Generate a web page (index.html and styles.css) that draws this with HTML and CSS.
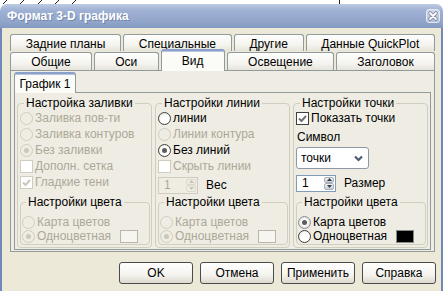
FILE: index.html
```html
<!DOCTYPE html>
<html lang="ru">
<head>
    <meta charset="UTF-8">
    <meta name="viewport" content="width=device-width, initial-scale=1.0">
    <title>Формат 3-D графика</title>
    <link rel="stylesheet" href="styles.css">
</head>
<body>
    <svg class="backdrop" width="447" height="4" viewBox="0 0 447 4">
        <path d="M3 4 L7 0 M20 4 L24 0 M38 4 L42 0 M55 4 L59 0 M72 4 L76 0 M339.5 0 V4" stroke="#222" stroke-width="1" fill="none"/>
    </svg>
    <div class="window">
        <div class="titlebar">
            <span class="title">Формат 3-D графика</span>
            <span class="close">
                <svg width="12" height="12" viewBox="0 0 12 12">
                    <path d="M3 3 L9 9 M9 3 L3 9" stroke="#7b879e" stroke-width="3.6" stroke-linecap="round"/>
                    <path d="M3 3 L9 9 M9 3 L3 9" stroke="#fff" stroke-width="1.8" stroke-linecap="round"/>
                </svg>
            </span>
        </div>
        <div class="frame">
            <div class="tabs">
                <div class="tab-row back">
                    <div class="tab">Задние планы</div>
                    <div class="tab">Специальные</div>
                    <div class="tab">Другие</div>
                    <div class="tab">Данные QuickPlot</div>
                </div>
                <div class="tab-row front">
                    <div class="tab">Общие</div>
                    <div class="tab">Оси</div>
                    <div class="tab active">Вид</div>
                    <div class="tab">Освещение</div>
                    <div class="tab">Заголовок</div>
                </div>
                <div class="panel">
                    <div class="subtabs">
                        <div class="subtab">График 1</div>
                    </div>
                    <div class="subpanel">
                        <!-- fill -->
                        <fieldset class="group">
                            <legend>Настройка заливки</legend>
                            <div class="row off"><span class="radio"></span>Заливка пов-ти</div>
                            <div class="row off"><span class="radio"></span>Заливка контуров</div>
                            <div class="row off"><span class="radio on"></span>Без заливки</div>
                            <div class="row off"><span class="check"></span>Дополн. сетка</div>
                            <div class="row off">
                                <span class="check">
                                    <svg width="11" height="11" viewBox="0 0 11 11"><path d="M2 5.5 L4.5 8 L9 3" stroke="currentColor" stroke-width="2" fill="none"/></svg>
                                </span>Гладкие тени
                            </div>
                            <fieldset class="colors">
                                <legend>Настройки цвета</legend>
                                <div class="row off"><span class="radio"></span>Карта цветов</div>
                                <div class="row off">
                                    <span class="label"><span class="radio on"></span>Одноцветная</span>
                                    <span class="swatch"></span>
                                </div>
                            </fieldset>
                        </fieldset>
                        <!-- lines -->
                        <fieldset class="group">
                            <legend>Настройки линии</legend>
                            <div class="row"><span class="radio"></span>линии</div>
                            <div class="row off"><span class="radio"></span>Линии контура</div>
                            <div class="row"><span class="radio on"></span>Без линий</div>
                            <div class="row off"><span class="check"></span>Скрыть линии</div>
                            <div class="spin-row low off">
                                <div class="spin">
                                    <span class="val">1</span>
                                    <span class="arrows">
                                        <span><svg width="5" height="3" viewBox="0 0 5 3"><path d="M0 3 L2.5 0 L5 3Z" fill="currentColor"/></svg></span>
                                        <span><svg width="5" height="3" viewBox="0 0 5 3"><path d="M0 0 L2.5 3 L5 0Z" fill="currentColor"/></svg></span>
                                    </span>
                                </div>
                                <span class="caption">Вес</span>
                            </div>
                            <fieldset class="colors">
                                <legend>Настройки цвета</legend>
                                <div class="row off"><span class="radio"></span>Карта цветов</div>
                                <div class="row off">
                                    <span class="label"><span class="radio on"></span>Одноцветная</span>
                                    <span class="swatch"></span>
                                </div>
                            </fieldset>
                        </fieldset>
                        <!-- points -->
                        <fieldset class="group">
                            <legend>Настройки точки</legend>
                            <div class="row">
                                <span class="check">
                                    <svg width="11" height="11" viewBox="0 0 11 11"><path d="M2 5.5 L4.5 8 L9 3" stroke="currentColor" stroke-width="2" fill="none"/></svg>
                                </span>Показать точки
                            </div>
                            <div class="text-row">Символ</div>
                            <div class="select">
                                <span>точки</span>
                                <svg width="9" height="7" viewBox="0 0 9 7"><path d="M1 1.5 L4.5 5 L8 1.5" stroke="#4e5a70" stroke-width="2.2" fill="none"/></svg>
                            </div>
                            <div class="spin-row">
                                <div class="spin">
                                    <span class="val">1</span>
                                    <span class="arrows">
                                        <span><svg width="5" height="3" viewBox="0 0 5 3"><path d="M0 3 L2.5 0 L5 3Z" fill="currentColor"/></svg></span>
                                        <span><svg width="5" height="3" viewBox="0 0 5 3"><path d="M0 0 L2.5 3 L5 0Z" fill="currentColor"/></svg></span>
                                    </span>
                                </div>
                                <span class="caption">Размер</span>
                            </div>
                            <fieldset class="colors">
                                <legend>Настройки цвета</legend>
                                <div class="row"><span class="radio on"></span>Карта цветов</div>
                                <div class="row">
                                    <span class="label"><span class="radio"></span>Одноцветная</span>
                                    <span class="swatch black"></span>
                                </div>
                            </fieldset>
                        </fieldset>
                    </div>
                </div>
            </div>
            <div class="buttons">
                <button>OK</button>
                <button>Отмена</button>
                <button>Применить</button>
                <button>Справка</button>
            </div>
        </div>
    </div>
</body>
</html>
```

FILE: styles.css
```css
*{
    margin:0;
    padding:0;
    box-sizing:border-box;
}
body{
    width:447px;
    height:291px;
    overflow:hidden;
    background-color:#fff;
    font-family:"Liberation Sans", Arial, sans-serif;
    font-size:12px;
    color:#000;
}
.backdrop{
    display:block;
}

/* window */
.window{
    width:443px;
}
.titlebar{
    height:24px;
    display:flex;
    align-items:center;
    justify-content:space-between;
    padding:0 3px 0 7px;
    border-radius:7px 7px 0 0;
    background:linear-gradient(#bccae3, #a0b2d4 25%, #91a5ca 75%, #8399c1);
}
.title{
    color:#fff;
    font-weight:bold;
    font-size:12px;
    text-shadow:1px 1px 0 rgba(70,90,130,0.45);
}
.close{
    width:14px;
    height:14px;
    display:flex;
    align-items:center;
    justify-content:center;
    border:1px solid #e4e9f3;
    border-radius:3px;
    background:linear-gradient(#d2dbec, #aebcd8);
}
.frame{
    height:263px;
    border-left:2px solid #7189b9;
    border-right:2px solid #7189b9;
    padding:6px 6px 0 8px;
    background-color:#ece9d8;
}

/* tabs */
.tab-row{
    display:flex;
    gap:2px;
    align-items:flex-end;
}
.tab-row.back{
    height:17px;
    margin-bottom:1px;
}
.tab-row.front{
    height:18px;
}
.tab{
    flex:1 1 auto;
    height:100%;
    display:flex;
    align-items:center;
    justify-content:center;
    padding:1px 4px 0;
    white-space:nowrap;
    border:1px solid #919b9c;
    border-bottom:none;
    border-radius:3px 3px 0 0;
    background:linear-gradient(#fefefe, #f5f4ef 60%, #e6e4da);
}
.tab-row.back .tab{
    padding-top:2px;
}
.tab.active,
.subtab{
    position:relative;
    z-index:1;
    border-top:2px solid #8aa0ca;
    box-shadow:inset 0 1px 0 #b9c6df;
    background:#fbfbf8;
}
.tab.active{
    height:22px;
    margin-bottom:-1px;
    padding-top:0;
}
.panel{
    height:182px;
    border:1px solid #919b9c;
    padding:1px 3px;
    background-color:#efede3;
}
.subtabs{
    height:20px;
    display:flex;
    align-items:flex-start;
}
.subtab{
    width:62px;
    height:21px;
    display:flex;
    align-items:center;
    justify-content:center;
    border-left:1px solid #919b9c;
    border-right:1px solid #919b9c;
    border-radius:3px 3px 0 0;
}
.subpanel{
    height:158px;
    border:1px solid #919b9c;
    padding:3px 2px 1px;
    display:flex;
    gap:3px;
}

/* group boxes */
fieldset{
    min-width:0;
    border:1px solid #d0cebf;
    border-radius:4px;
    display:flex;
    flex-direction:column;
}
legend{
    margin-left:4px;
    padding:0 2px;
    line-height:14px;
}
.group{
    flex:1;
    padding:0 1px 2px 2px;
}
.colors{
    margin-top:auto;
    padding:6px 11px 1px 1px;
}
.row{
    height:16px;
    display:flex;
    align-items:center;
    gap:2px;
    white-space:nowrap;
}
.colors .row{
    height:14px;
    justify-content:space-between;
}
.colors .row:first-of-type{
    justify-content:flex-start;
}
.label{
    display:flex;
    align-items:center;
    gap:2px;
}
.off{
    color:#aca899;
}
.text-row{
    height:16px;
    line-height:16px;
    margin-top:3px;
    padding-left:1px;
}

/* radio and check */
.radio{
    width:13px;
    height:13px;
    flex:none;
    border:1px solid #3f3f3f;
    border-radius:50%;
    background:radial-gradient(circle at 60% 60%, #fff 40%, #e0ded4);
    display:flex;
    align-items:center;
    justify-content:center;
}
.radio.on::after{
    content:"";
    width:5px;
    height:5px;
    border-radius:50%;
    background-color:#5c5c5c;
}
.off .radio{
    border-color:#cfcdc0;
    background:none;
}
.off .radio.on::after{
    background-color:#cac8bb;
}
.colors .row:not(.off) .radio.on{
    border-color:#8d8d8d;
    background:radial-gradient(#fff 35%, #c9c9c9);
}
.check{
    width:13px;
    height:13px;
    flex:none;
    border:1px solid #3f3f3f;
    background-color:#fff;
    color:#707070;
    display:flex;
}
.off .check{
    border-color:#cfcdc0;
    color:#cac8bb;
}

/* inputs */
.select{
    width:73px;
    height:22px;
    margin-top:2px;
    display:flex;
    align-items:center;
    justify-content:space-between;
    padding:0 5px 0 4px;
    border:1px solid #8e99a8;
    border-radius:3px;
    background-color:#fff;
}
.spin-row{
    height:18px;
    margin-top:5px;
    display:flex;
    align-items:center;
    gap:8px;
}
.spin-row.low{
    margin-top:2px;
}
.spin{
    width:40px;
    height:17px;
    display:flex;
    border:1px solid #7f9db9;
    background-color:#fff;
}
.spin .val{
    flex:1;
    padding-left:5px;
    line-height:15px;
}
.arrows{
    width:11px;
    display:flex;
    flex-direction:column;
    padding:1px 1px 1px 0;
    color:#3c3c3c;
}
.arrows span{
    flex:1;
    display:flex;
    align-items:center;
    justify-content:center;
    border:1px solid #a7afbd;
    border-radius:2px;
    background:linear-gradient(#f2f2f2, #c9cdd4);
}
.off .spin{
    border-color:#cfcdc0;
    background:none;
}
.off .arrows{
    color:#c5c3b6;
}
.off .arrows span{
    border-color:#dcdad0;
    background:none;
}
.off .caption{
    color:#000;
}
.swatch{
    width:18px;
    height:13px;
    border:1px solid #b9b7aa;
    background-color:#f6f5f0;
}
.swatch.black{
    border-color:#888;
    background-color:#000;
}

/* buttons */
.buttons{
    display:flex;
    justify-content:flex-end;
    gap:7px;
    margin:10px -1px 0 0;
}
button{
    width:74px;
    height:22px;
    font-family:inherit;
    font-size:12px;
    color:#000;
    border:1px solid #4b4b4b;
    border-radius:3px;
    background:linear-gradient(#fff, #f4f3ee 60%, #dcd9cd);
}
```
